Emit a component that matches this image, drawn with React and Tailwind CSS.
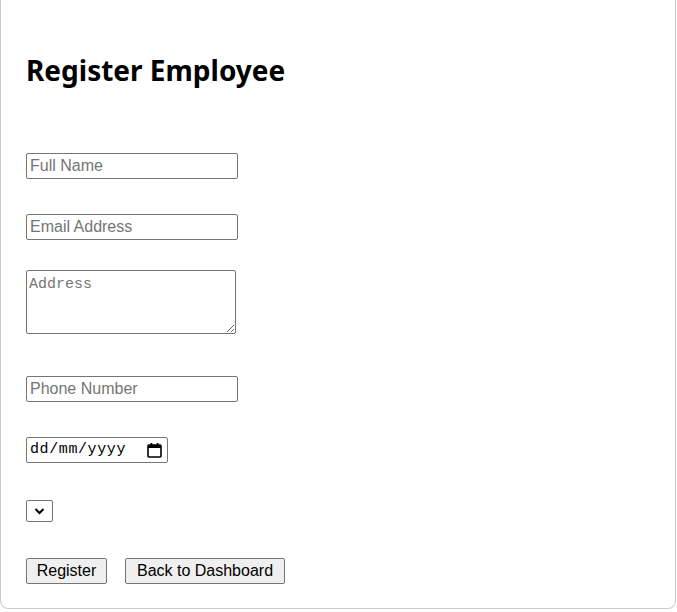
import React, { useState } from 'react';

export default function App() {
  const [form, setForm] = useState({ name: '', email: '', address: '', phone: '' });

  const handleChange = (field, value) => {
    setForm((prev) => ({ ...prev, [field]: value }));
  };

  const inputClass =
    'w-[212px] h-[26px] px-[3px] border border-[#767676] rounded-[2px] bg-white text-[16px] text-black placeholder:text-[#757575] outline-none';

  return (
    <div className="bg-white min-h-[612px] font-['Liberation_Sans',Arial,sans-serif]">
      <div className="w-[676px] h-[609px] bg-white border border-t-0 border-[#cccccc] rounded-b-[8px] pl-[25px] pt-[50px]">
        <h1 className="text-[28px] leading-[40px] font-bold text-black font-['Noto_Sans',sans-serif]">
          Register Employee
        </h1>

        <form className="flex flex-col items-start mt-[63px]" onSubmit={(e) => e.preventDefault()}>
          <input
            type="text"
            className={inputClass}
            value={form.name}
            onChange={(e) => handleChange('name', e.target.value)}
            placeholder="Full Name"
          />

          <input
            type="email"
            className={`${inputClass} mt-[35px]`}
            value={form.email}
            onChange={(e) => handleChange('email', e.target.value)}
            placeholder="Email Address"
          />

          <textarea
            className="mt-[30px] w-[210px] h-[64px] px-[2px] pt-[5px] pb-[2px] border border-[#767676] rounded-[2px] bg-white text-[15px] leading-[17px] font-['Liberation_Mono',monospace] placeholder:text-[#757575] outline-none"
            value={form.address}
            onChange={(e) => handleChange('address', e.target.value)}
            placeholder="Address"
          ></textarea>

          <input
            type="tel"
            className={`${inputClass} mt-[42px]`}
            value={form.phone}
            onChange={(e) => handleChange('phone', e.target.value)}
            placeholder="Phone Number"
          />

          {/* date field */}
          <div className="mt-[35px] w-[142px] h-[26px] flex items-center justify-between pl-[3px] pr-[5px] border border-[#767676] rounded-[2px] bg-white text-[15px] text-black font-['Liberation_Mono',monospace]">
            <span className="tracking-[0.6px] pt-[1px]">dd/mm/yyyy</span>
            <svg width="15" height="16" viewBox="0 0 15 16" fill="none">
              <rect x="1" y="3" width="13" height="12" rx="1" stroke="black" strokeWidth="1.6" />
              <rect x="1" y="3" width="13" height="3" fill="black" />
              <rect x="3.5" y="1" width="1.8" height="3" fill="black" />
              <rect x="9.7" y="1" width="1.8" height="3" fill="black" />
            </svg>
          </div>

          {/* select (no options) */}
          <div className="mt-[37px] w-[27px] h-[22px] flex items-center justify-center border border-[#767676] rounded-[2px] bg-white">
            <svg width="11" height="8" viewBox="0 0 11 8" fill="none">
              <path d="M1.5 2 L5.5 6 L9.5 2" stroke="black" strokeWidth="2" />
            </svg>
          </div>

          <div className="flex gap-[18px] mt-[36px]">
            <button
              type="submit"
              className="w-[81px] h-[26px] bg-[#efefef] border border-[#767676] rounded-[2px] text-[16px] text-black"
            >
              Register
            </button>
            <button
              type="button"
              className="w-[160px] h-[26px] bg-[#efefef] border border-[#767676] rounded-[2px] text-[16px] text-black"
            >
              Back to Dashboard
            </button>
          </div>
        </form>
      </div>
    </div>
  );
}
